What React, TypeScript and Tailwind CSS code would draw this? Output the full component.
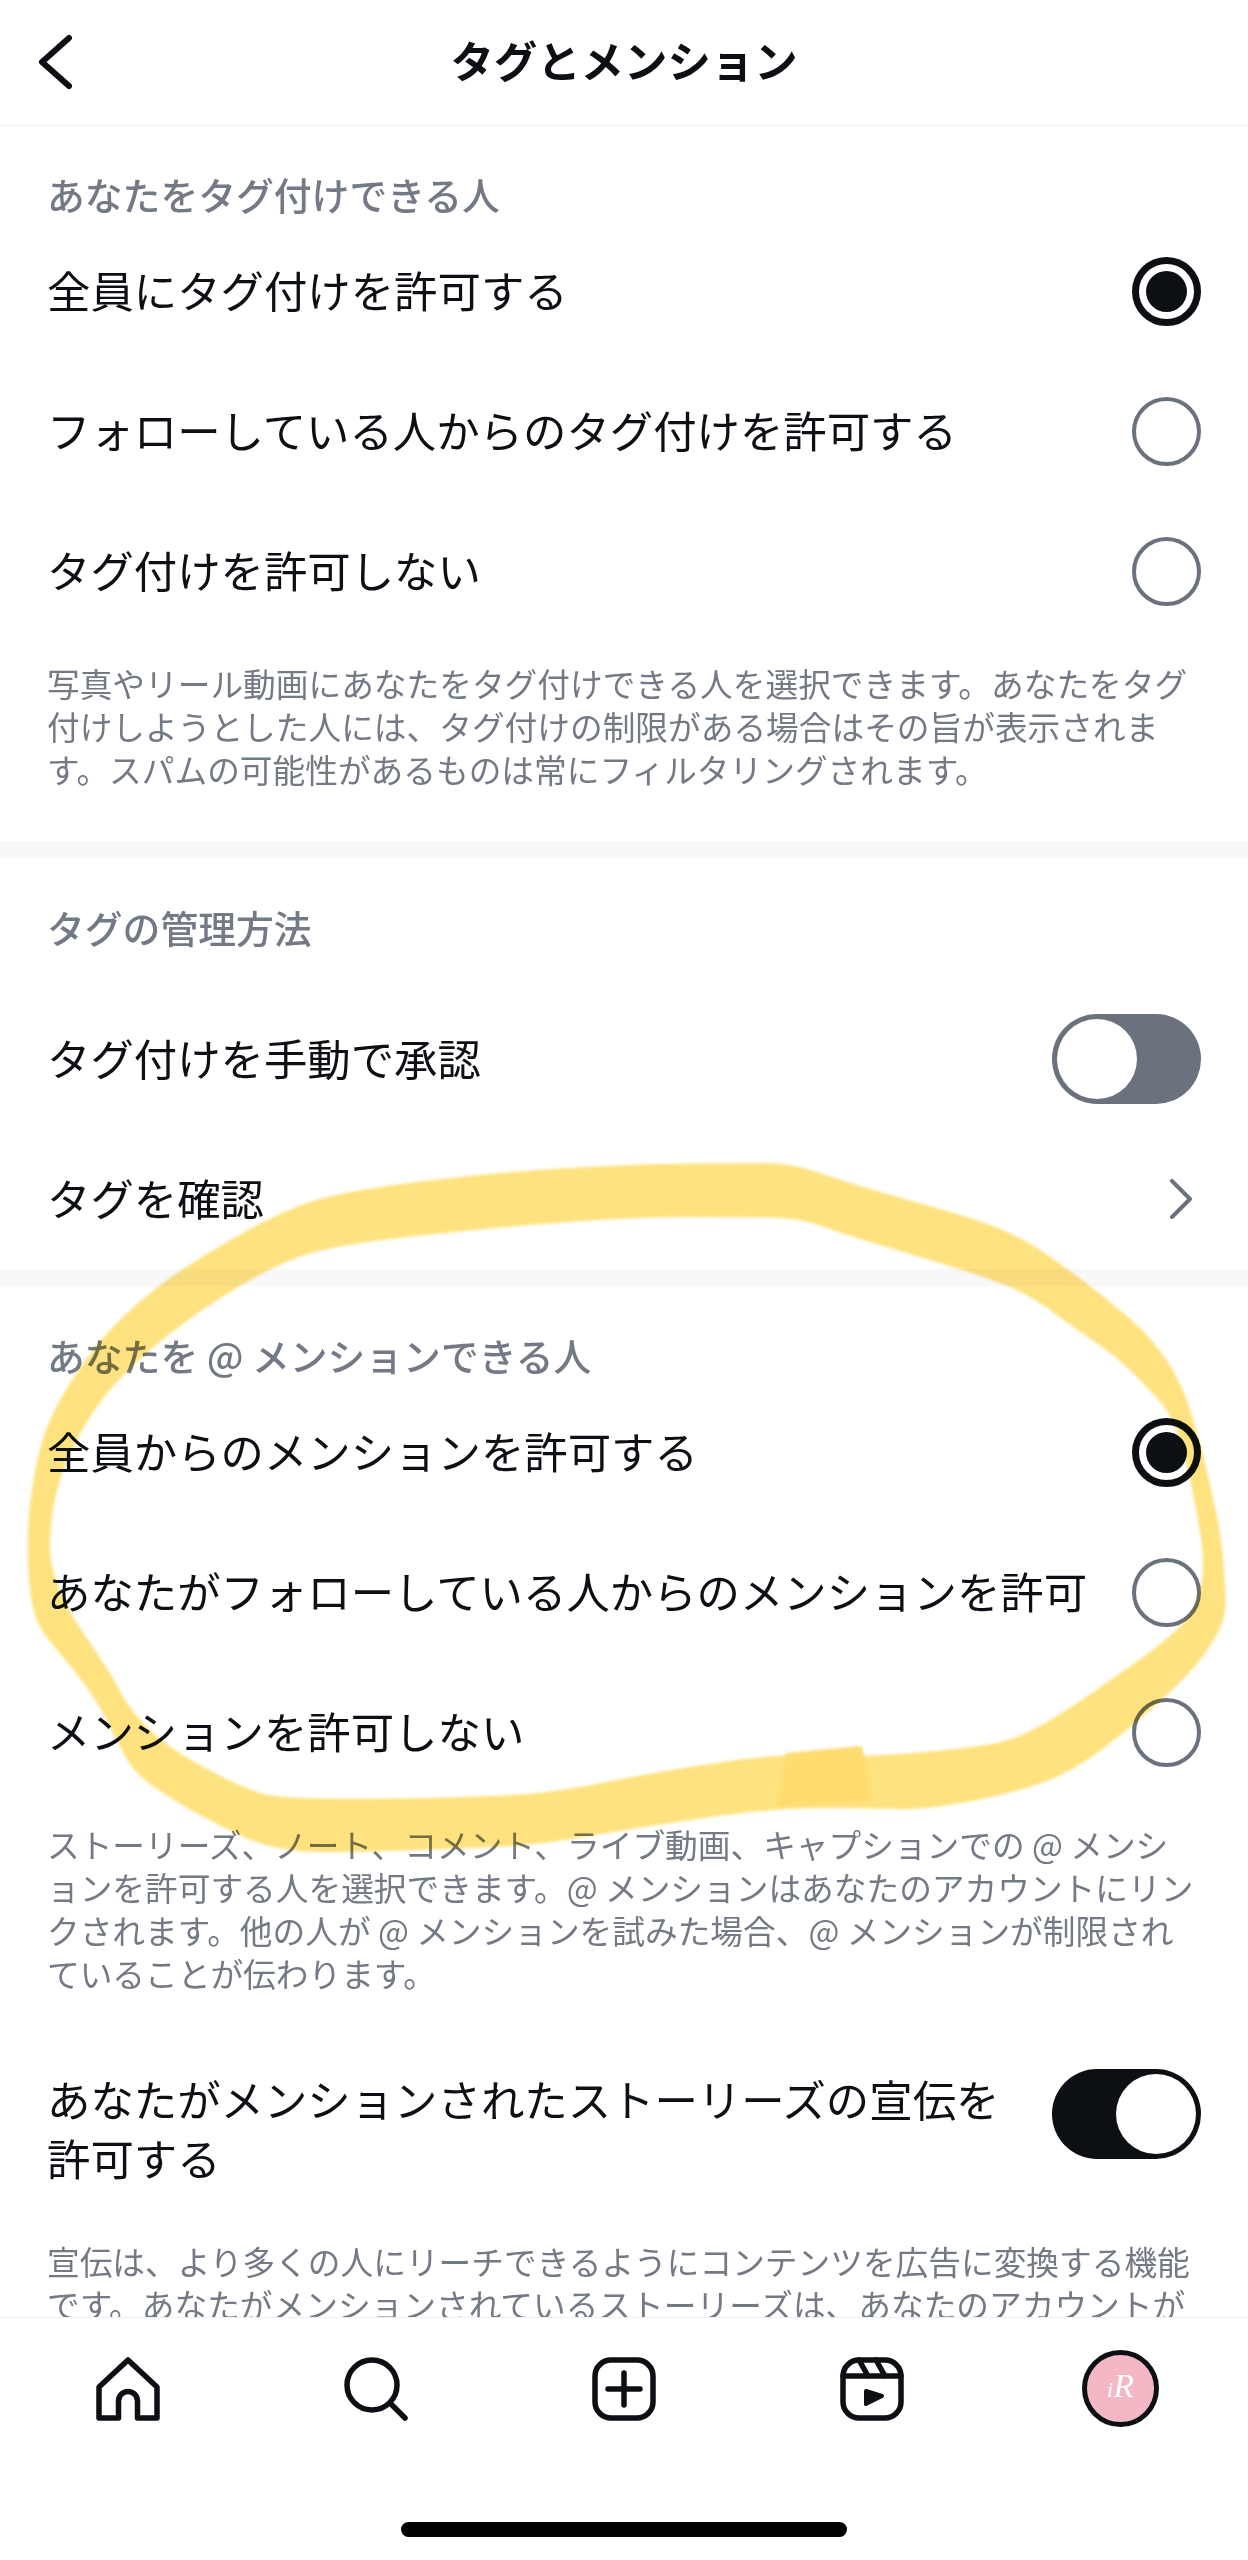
const outerEdge = [
  [637, 1164], [740, 1163], [790, 1163], [840, 1180], [907, 1200], [973, 1218], [1027, 1240], [1073, 1273],
  [1117, 1307], [1153, 1340], [1180, 1380], [1197, 1430], [1210, 1483], [1222, 1540], [1226, 1597], [1225, 1617],
  [1213, 1643], [1187, 1677], [1120, 1737], [1063, 1777], [996, 1797], [920, 1810], [872, 1808], [777, 1808],
  [667, 1823], [548, 1843], [500, 1847], [367, 1852], [277, 1852], [213, 1823], [157, 1790], [133, 1770],
  [120, 1747], [97, 1700], [60, 1653], [40, 1630], [30, 1600], [27, 1547], [30, 1497], [43, 1430],
  [77, 1370], [120, 1317], [183, 1267], [283, 1210], [350, 1190], [500, 1172],
]

const innerEdge = [
  [637, 1217], [740, 1217], [800, 1218], [840, 1233], [907, 1253], [973, 1273], [1027, 1293], [1073, 1327],
  [1117, 1357], [1150, 1390], [1173, 1417], [1187, 1463], [1197, 1513], [1205, 1563], [1197, 1610], [1163, 1643],
  [1115, 1677], [1063, 1713], [1015, 1740], [968, 1748], [872, 1757], [786, 1753], [667, 1770], [567, 1790],
  [500, 1797], [283, 1800], [240, 1787], [167, 1747], [130, 1710], [113, 1677], [90, 1643], [70, 1613],
  [55, 1580], [48, 1547], [57, 1480], [90, 1413], [133, 1363], [200, 1310], [283, 1260], [350, 1243],
  [500, 1227],
]

function smoothLoop(points: number[][]) {
  const mid = (a: number[], b: number[]) => `${(a[0] + b[0]) / 2} ${(a[1] + b[1]) / 2}`
  let d = `M${mid(points[points.length - 1], points[0])}`
  points.forEach((p, i) => {
    d += ` Q${p[0]} ${p[1]} ${mid(p, points[(i + 1) % points.length])}`
  })
  return d + ' Z'
}

function Radio({ checked }: { checked?: boolean }) {
  if (checked) {
    return (
      <span className="flex h-[69px] w-[69px] shrink-0 items-center justify-center rounded-full border-[7px] border-[#0c1014]">
        <span className="h-[41px] w-[41px] rounded-full bg-[#0c1014]" />
      </span>
    )
  }
  return <span className="h-[69px] w-[69px] shrink-0 rounded-full border-[4px] border-[#6b727d]" />
}

function Toggle({ on }: { on?: boolean }) {
  return (
    <span
      className={`flex h-[90px] w-[149px] shrink-0 items-center rounded-full px-[5px] ${
        on ? 'justify-end bg-[#0c1014]' : 'justify-start bg-[#6b727d]'
      }`}
    >
      <span className="h-[80px] w-[80px] rounded-full bg-white" />
    </span>
  )
}

function Heading({ children }: { children: React.ReactNode }) {
  return <h2 className="h-[50px] text-[37.8px] leading-[46px] font-medium text-[#737a85]">{children}</h2>
}

function Row({ label, children }: { label: string; children: React.ReactNode }) {
  return (
    <div className="flex h-[140px] items-center justify-between">
      <span className="pb-[4px] text-[43.4px] leading-[59px] whitespace-nowrap text-[#0c1014]">{label}</span>
      {children}
    </div>
  )
}

function Note({ lines, className }: { lines: string[]; className?: string }) {
  return (
    <p className={`text-[32.7px] leading-[43px] whitespace-nowrap text-[#737a85] ${className ?? ''}`}>
      {lines.map((line) => (
        <span key={line} className="block">
          {line}
        </span>
      ))}
    </p>
  )
}

function Section({ children, className }: { children: React.ReactNode; className?: string }) {
  return <section className={`px-[47px] ${className ?? ''}`}>{children}</section>
}

export default function App() {
  return (
    <div
      className="relative flex h-[2560px] w-[1248px] flex-col overflow-hidden bg-white"
      style={{ fontFamily: '"Noto Sans CJK JP", "Noto Sans", sans-serif' }}
    >
      <header className="relative flex h-[126px] shrink-0 items-center justify-center border-b border-[#f0f1f3] pb-[5px]">
        <svg className="absolute top-[34px] left-[36px] h-[56px] w-[38px]" viewBox="0 0 38 56" fill="none">
          <path d="M33 4 L6 28 L33 52" stroke="#0c1014" strokeWidth="6" strokeLinecap="round" strokeLinejoin="round" />
        </svg>
        <h1 className="text-[43.4px] font-bold text-[#0c1014]">タグとメンション</h1>
      </header>

      <main className="min-h-0 flex-1 overflow-hidden">
        <Section className="pt-[45px] pb-[51px]">
          <Heading>あなたをタグ付けできる人</Heading>
          <Row label="全員にタグ付けを許可する">
            <Radio checked />
          </Row>
          <Row label="フォローしている人からのタグ付けを許可する">
            <Radio />
          </Row>
          <Row label="タグ付けを許可しない">
            <Radio />
          </Row>
          <Note
            className="mt-[20px]"
            lines={[
              '写真やリール動画にあなたをタグ付けできる人を選択できます。あなたをタグ',
              '付けしようとした人には、タグ付けの制限がある場合はその旨が表示されま',
              'す。スパムの可能性があるものは常にフィルタリングされます。',
            ]}
          />
        </Section>
        <div className="h-[17px] bg-[#f8f8f8]" />

        <Section className="pt-[46px]">
          <Heading>タグの管理方法</Heading>
          <div className="mt-[35px]">
            <Row label="タグ付けを手動で承認">
              <Toggle />
            </Row>
            <Row label="タグを確認">
              <svg className="mr-[8px] h-[40px] w-[24px]" viewBox="0 0 24 40" fill="none">
                <path d="M3 2 L21 20 L3 38" stroke="#6b727d" strokeWidth="4" strokeLinecap="round" strokeLinejoin="round" />
              </svg>
            </Row>
          </div>
        </Section>
        <div className="h-[17px] bg-[#f8f8f8]" />

        <Section className="pt-[46px]">
          <Heading>あなたを @ メンションできる人</Heading>
          <Row label="全員からのメンションを許可する">
            <Radio checked />
          </Row>
          <Row label="あなたがフォローしている人からのメンションを許可">
            <Radio />
          </Row>
          <Row label="メンションを許可しない">
            <Radio />
          </Row>
          <Note
            className="mt-[20px]"
            lines={[
              'ストーリーズ、ノート、コメント、ライブ動画、キャプションでの @ メンシ',
              'ョンを許可する人を選択できます。@ メンションはあなたのアカウントにリン',
              'クされます。他の人が @ メンションを試みた場合、@ メンションが制限され',
              'ていることが伝わります。',
            ]}
          />

          <div className="mt-[75px] flex items-start justify-between">
            <p className="text-[43.4px] leading-[59px] text-[#0c1014]">
              あなたがメンションされたストーリーズの宣伝を
              <br />
              許可する
            </p>
            <Toggle on />
          </div>
          <Note
            className="mt-[52px]"
            lines={[
              '宣伝は、より多くの人にリーチできるようにコンテンツを広告に変換する機能',
              'です。あなたがメンションされているストーリーズは、あなたのアカウントが',
            ]}
          />
        </Section>
      </main>

      <nav className="h-[243px] shrink-0 border-t border-[#eceef0] bg-white">
        <div className="mt-[32px] flex h-[77px] items-center gap-[184px] pl-[96px]">
          <svg className="h-[64px] w-[64px] shrink-0" viewBox="0 0 64 64" fill="none" stroke="#0c1014" strokeWidth="5.5" strokeLinejoin="round" strokeLinecap="round">
            <path d="M32 3 L61 30 V61 H41.5 V44 A9.5 9.5 0 0 0 22.5 44 V61 H3 V30 Z" />
          </svg>
          <svg className="h-[64px] w-[64px] shrink-0" viewBox="0 0 64 64" fill="none" stroke="#0c1014" strokeWidth="5.5" strokeLinecap="round">
            <circle cx="28" cy="28" r="25" />
            <path d="M46 46 L61 61" />
          </svg>
          <svg className="h-[64px] w-[64px] shrink-0" viewBox="0 0 64 64" fill="none" stroke="#0c1014" strokeWidth="5.5" strokeLinecap="round">
            <rect x="3" y="3" width="58" height="58" rx="16" />
            <path d="M32 16 V48 M16 32 H48" />
          </svg>
          <svg className="h-[64px] w-[64px] shrink-0" viewBox="0 0 64 64" fill="none" stroke="#0c1014" strokeWidth="5.5" strokeLinecap="round" strokeLinejoin="round">
            <rect x="3" y="3" width="58" height="58" rx="16" />
            <path d="M3 19 H61 M19 3 L28 19 M36 3 L45 19" />
            <path d="M26 34 L42 39 L26 47 Z" fill="#0c1014" strokeWidth="4" />
          </svg>
          <span className="-ml-[6px] flex h-[77px] w-[77px] shrink-0 items-baseline justify-center rounded-full border-[5px] border-[#0c1014] bg-[#f4b8c4] pt-[11px] font-['Liberation_Serif'] text-[34px] leading-[40px] text-white italic">
            <span className="text-[22px]">i</span>R
          </span>
        </div>
        <div className="mx-auto mt-[95px] h-[15px] w-[446px] rounded-full bg-black" />
      </nav>

      {/* marker scribble drawn over the screenshot */}
      <svg className="pointer-events-none absolute inset-0 h-[2560px] w-[1248px] mix-blend-multiply" viewBox="0 0 1248 2560">
        <defs>
          <filter id="soft">
            <feGaussianBlur stdDeviation="1.5" />
          </filter>
        </defs>
        <g filter="url(#soft)">
          <path d={`${smoothLoop(outerEdge)} ${smoothLoop(innerEdge)}`} fill="#fee27f" fillRule="evenodd" />
          <path d="M786 1753 L862 1746 L872 1800 L777 1807 Z" fill="#fedc70" />
        </g>
      </svg>
    </div>
  )
}
